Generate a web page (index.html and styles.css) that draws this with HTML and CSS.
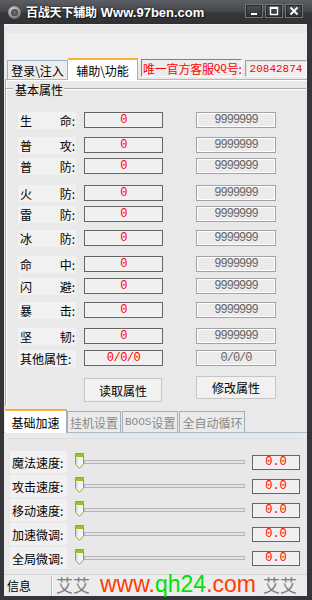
FILE: index.html
```html
<!DOCTYPE html>
<html>
<head>
<meta charset="utf-8">
<link rel="stylesheet" href="styles.css">
</head>
<body>
<div class="window">
  <div class="titlebar">
    <div class="appicon"><div class="appicon-in"></div></div>
    <div class="title"><span class="title-cn">百战天下辅助</span><span class="title-en">Www.97ben.com</span></div>
    <div class="tbtns">
      <div class="tbtn"><svg width="18" height="14" viewBox="0 0 18 14"><rect x="6" y="9" width="6" height="2" fill="#fff"/></svg></div>
      <div class="tbtn"><svg width="18" height="14" viewBox="0 0 18 14"><rect x="5.5" y="3.5" width="7" height="7" fill="none" stroke="#fff" stroke-width="1.4"/><rect x="5" y="3" width="8" height="2" fill="#fff"/></svg></div>
      <div class="tbtn"><svg width="18" height="14" viewBox="0 0 18 14"><path d="M5.5 3.5 L12.5 10.5 M12.5 3.5 L5.5 10.5" stroke="#fff" stroke-width="1.8"/></svg></div>
    </div>
  </div>
  <div class="client">
    <div class="topband"></div>
    <div class="tabrow">
      <div class="tab">登录\注入</div>
      <div class="tab active">辅助\功能</div>
      <div class="qqlabel">唯一官方客服<span class="mono">QQ</span>号:</div>
      <div class="qqbox">20842874</div>
    </div>
    <div class="panel1">
      <div class="legend"><span class="legend-line short"></span><span class="legend-text">基本属性</span><span class="legend-line"></span></div>
      <div class="rows">
        <div class="row r1"><div class="lbl"><span>生</span><span>命:</span></div><div class="val">0</div><div class="max">9999999</div></div>
        <div class="row r2"><div class="lbl"><span>普</span><span>攻:</span></div><div class="val">0</div><div class="max">9999999</div></div>
        <div class="row r3"><div class="lbl"><span>普</span><span>防:</span></div><div class="val">0</div><div class="max">9999999</div></div>
        <div class="row r4"><div class="lbl"><span>火</span><span>防:</span></div><div class="val">0</div><div class="max">9999999</div></div>
        <div class="row r5"><div class="lbl"><span>雷</span><span>防:</span></div><div class="val">0</div><div class="max">9999999</div></div>
        <div class="row r6"><div class="lbl"><span>冰</span><span>防:</span></div><div class="val">0</div><div class="max">9999999</div></div>
        <div class="row r7"><div class="lbl"><span>命</span><span>中:</span></div><div class="val">0</div><div class="max">9999999</div></div>
        <div class="row r8"><div class="lbl"><span>闪</span><span>避:</span></div><div class="val">0</div><div class="max">9999999</div></div>
        <div class="row r9"><div class="lbl"><span>暴</span><span>击:</span></div><div class="val">0</div><div class="max">9999999</div></div>
        <div class="row r10"><div class="lbl"><span>坚</span><span>韧:</span></div><div class="val">0</div><div class="max">9999999</div></div>
        <div class="row r11"><div class="lbl"><span>其他属性:</span></div><div class="val">0/0/0</div><div class="max">0/0/0</div></div>
      </div>
      <div class="btnrow">
        <div class="btn btn-read">读取属性</div>
        <div class="btn btn-write">修改属性</div>
      </div>
    </div>
    <div class="tabrow2">
      <div class="tab2 active">基础加速</div>
      <div class="tab2">挂机设置</div>
      <div class="tab2"><span class="mono">BOOS</span>设置</div>
      <div class="tab2">全自动循环</div>
    </div>
    <div class="panel2">
      <div class="panel2-in">
        <div class="srow"><div class="slbl">魔法速度:</div><div class="slider"><svg class="thumb" width="9" height="16" viewBox="0 0 9 16"><path d="M0.5 0.5 H8.5 V11 L4.5 15.5 L0.5 11 Z" fill="#f4f4f4" stroke="#7cb518"/><rect x="1" y="1" width="7" height="3" fill="#8fc81c"/><path d="M2 5 V11" stroke="#c8c8c8"/></svg><div class="track"></div></div><div class="sval">0.0</div></div>
        <div class="srow"><div class="slbl">攻击速度:</div><div class="slider"><svg class="thumb" width="9" height="16" viewBox="0 0 9 16"><path d="M0.5 0.5 H8.5 V11 L4.5 15.5 L0.5 11 Z" fill="#f4f4f4" stroke="#7cb518"/><rect x="1" y="1" width="7" height="3" fill="#8fc81c"/><path d="M2 5 V11" stroke="#c8c8c8"/></svg><div class="track"></div></div><div class="sval">0.0</div></div>
        <div class="srow"><div class="slbl">移动速度:</div><div class="slider"><svg class="thumb" width="9" height="16" viewBox="0 0 9 16"><path d="M0.5 0.5 H8.5 V11 L4.5 15.5 L0.5 11 Z" fill="#f4f4f4" stroke="#7cb518"/><rect x="1" y="1" width="7" height="3" fill="#8fc81c"/><path d="M2 5 V11" stroke="#c8c8c8"/></svg><div class="track"></div></div><div class="sval">0.0</div></div>
        <div class="srow"><div class="slbl">加速微调:</div><div class="slider"><svg class="thumb" width="9" height="16" viewBox="0 0 9 16"><path d="M0.5 0.5 H8.5 V11 L4.5 15.5 L0.5 11 Z" fill="#f4f4f4" stroke="#7cb518"/><rect x="1" y="1" width="7" height="3" fill="#8fc81c"/><path d="M2 5 V11" stroke="#c8c8c8"/></svg><div class="track"></div></div><div class="sval">0.0</div></div>
        <div class="srow"><div class="slbl">全局微调:</div><div class="slider"><svg class="thumb" width="9" height="16" viewBox="0 0 9 16"><path d="M0.5 0.5 H8.5 V11 L4.5 15.5 L0.5 11 Z" fill="#f4f4f4" stroke="#7cb518"/><rect x="1" y="1" width="7" height="3" fill="#8fc81c"/><path d="M2 5 V11" stroke="#c8c8c8"/></svg><div class="track"></div></div><div class="sval">0.0</div></div>
      </div>
    </div>
    <div class="status">
      <div class="status-info">信息</div>
      <div class="status-sep"></div>
      <div class="watermark"><span class="wm-grey">艾艾</span><span class="wm-red">www.</span><span class="wm-green">qh24</span><span class="wm-red">.com</span><span class="wm-grey wm-right">艾艾</span></div>
    </div>
  </div>
</div>
</body>
</html>
```

FILE: styles.css
```css
* { box-sizing: border-box; }
html, body { margin: 0; padding: 0; }
body {
  width: 312px;
  height: 600px;
  overflow: hidden;
  font-family: "Noto Sans CJK SC", "Liberation Sans", sans-serif;
  font-size: 12px;
  color: #000;
}
.window {
  width: 312px;
  height: 600px;
  background: #34363a;
  display: flex;
  flex-direction: column;
}
.titlebar {
  height: 24px;
  flex: none;
  display: flex;
  align-items: center;
  background: linear-gradient(#5b5e64 0%, #46484d 45%, #35373b 55%, #2f3135 100%);
}
.appicon {
  width: 13px;
  height: 13px;
  margin-left: 8px;
  border-radius: 50%;
  background: radial-gradient(circle at 40% 35%, #e8e8e8 0%, #9a9a9a 45%, #4a4a4a 100%);
  display: flex;
  align-items: center;
  justify-content: center;
}
.appicon-in {
  width: 7px;
  height: 7px;
  border-radius: 50%;
  background: radial-gradient(circle at 50% 50%, #7a7a7a 0%, #2a2a2a 100%);
}
.title {
  margin-left: 5px;
  color: #fff;
  font-weight: bold;
  display: flex;
  align-items: baseline;
  text-shadow: 0 0 2px #1a1a1a, 1px 1px 1px #1a1a1a;
  margin-top: -2px;
}
.title-cn { font-size: 12px; letter-spacing: -0.2px; }
.title-en { font-family: "Liberation Sans", sans-serif; font-size: 13px; margin-left: 4px; }
.tbtns {
  margin-left: auto;
  margin-right: 9px;
  display: flex;
  gap: 2px;
  margin-top: -2px;
}
.tbtn {
  width: 18px;
  height: 14px;
  border: 1px solid #74777c;
  background: linear-gradient(#4c4f54, #2c2e32);
  box-shadow: inset 0 0 0 1px #25272a;
  display: flex;
}
.tbtn svg { margin: -1px; }
.client {
  flex: 1;
  margin: 0 5px 4px 4px;
  background: #e9e9e9;
  border-top: 1px solid #f4f4f4;
  display: flex;
  flex-direction: column;
}
.topband {
  height: 32px;
  margin: 8px 0 0 3px;
  background: #efefef;
  flex: none;
  margin-bottom: -40px;
}
.tabrow {
  margin-top: 33px;
  height: 21px;
  display: flex;
  align-items: flex-end;
  padding-left: 3px;
  position: relative;
  z-index: 2;
  flex: none;
}
.tab {
  height: 19px;
  width: 61px;
  border: 1px solid #9fb1bf;
  border-bottom: none;
  background: #ececec;
  display: flex;
  align-items: center;
  justify-content: center;
  white-space: nowrap;
  padding-top: 1px;
}
.tab.active {
  height: 22px;
  width: 70px;
  background: #fff;
  border-top: 2px solid #f6b334;
  margin-bottom: -1px;
  border-left: none;
}
.qqlabel {
  align-self: flex-start;
  margin-left: 3px;
  margin-top: 1px;
  height: 18px;
  width: 101px;
  border: 1px solid;
  border-color: #808080 #ffffff #ffffff #808080;
  background: #ececec;
  color: #ff0000;
  font-size: 12px;
  display: flex;
  align-items: center;
  padding-left: 1px;
  white-space: nowrap;
  letter-spacing: -0.2px;
}
.mono { font-family: "Liberation Mono", "DejaVu Sans Mono", monospace; font-size: 11px; }
.qqbox {
  align-self: flex-start;
  margin-left: 3px;
  margin-top: 2px;
  height: 17px;
  width: 62px;
  border: 1px solid;
  border-color: #a0a0a0 #ffffff #ffffff #a0a0a0;
  box-shadow: inset 1px 1px 0 #e0e0e0;
  background: #f0f0f0;
  color: #ff0000;
  font-family: "Liberation Mono", monospace;
  font-size: 11px;
  display: flex;
  align-items: center;
  justify-content: center;
}
.panel1 {
  height: 327px;
  margin-left: 1px;
  border-left: 1px solid #a8a8a8;
  border-top: 1px solid #a9bac6;
  box-shadow: inset 1px 1px 0 #ffffff;
  flex: none;
  display: flex;
  flex-direction: column;
}
.legend {
  margin-top: 2px;
  height: 14px;
  display: flex;
  align-items: center;
}
.legend-line {
  flex: 1;
  height: 2px;
  border-top: 1px solid #a8a8a8;
  border-bottom: 1px solid #ffffff;
  margin-right: 1px;
}
.legend-line.short { flex: none; width: 7px; }
.legend-text { padding: 0 1px; }
.rows {
  display: flex;
  flex-direction: column;
  padding-left: 12px;
  margin-top: 16px;
}
.row {
  display: flex;
  align-items: center;
  height: 16px;
}
.r2 { margin-top: 9px; }
.r3 { margin-top: 5px; }
.r4 { margin-top: 11px; }
.r5 { margin-top: 5px; }
.r6 { margin-top: 8px; }
.r7 { margin-top: 10px; }
.r8 { margin-top: 6px; }
.r9 { margin-top: 8px; }
.r10 { margin-top: 10px; }
.r11 { margin-top: 6px; }
.lbl {
  width: 58px;
  height: 17px;
  background: #f1f1f1;
  display: flex;
  justify-content: space-between;
  align-items: center;
  padding: 0 1px 0 2px;
  white-space: nowrap;
}
.val {
  margin-left: 8px;
  width: 79px;
  height: 16px;
  border: 1px solid #666666;
  background: #f0f0f0;
  color: #ff0000;
  font-family: "Liberation Mono", monospace;
  font-size: 12px;
  letter-spacing: -0.5px;
  display: flex;
  align-items: center;
  justify-content: center;
}
.max {
  margin-left: 33px;
  width: 80px;
  height: 16px;
  border: 1px solid #a2a2a2;
  box-shadow: inset 0 0 0 1px #ffffff;
  background: #ebebeb;
  color: #666666;
  font-family: "Liberation Mono", monospace;
  font-size: 12px;
  letter-spacing: -1px;
  display: flex;
  align-items: center;
  justify-content: center;
}
.btnrow {
  display: flex;
  align-items: flex-start;
  padding-left: 78px;
  margin-top: 10px;
}
.btn {
  width: 78px;
  height: 23px;
  border: 1px solid #c6c6c6;
  background: #f1f1f1;
  display: flex;
  align-items: center;
  justify-content: center;
  font-size: 12px;
}
.btn-read { margin-top: 2px; height: 24px; }
.btn-write { margin-left: 34px; width: 80px; }
.tabrow2 {
  height: 26px;
  display: flex;
  align-items: flex-end;
  padding-left: 1px;
  flex: none;
  position: relative;
  z-index: 2;
}
.tab2 {
  height: 21px;
  border: 1px solid #9fb1bf;
  border-bottom: none;
  background: #eaeaea;
  color: #8a8a8a;
  display: flex;
  align-items: center;
  padding: 0 2px;
  margin-right: 1px;
  white-space: nowrap;
}
.tab2 .mono { font-size: 11px; }
.tab2.active {
  height: 24px;
  width: 62px;
  background: #fff;
  color: #000;
  border-top: 2px solid #f6b334;
  border-left: none;
  margin-bottom: -1px;
  justify-content: center;
  margin-right: 0;
}
.panel2 {
  height: 141px;
  border-top: 1px solid #a9bac6;
  flex: none;
  padding: 5px 4px 0 4px;
}
.panel2-in {
  height: 134px;
  background: #e8e8e8;
  border-top: 1px solid #dcdcdc;
  display: flex;
  flex-direction: column;
  padding-top: 15px;
  padding-left: 2px;
}
.srow {
  display: flex;
  align-items: center;
  height: 16px;
  margin-bottom: 8px;
}
.slbl {
  width: 57px;
  height: 22px;
  background: #f1f1f1;
  display: flex;
  align-items: center;
  padding-left: 2px;
  white-space: nowrap;
}
.slider {
  display: flex;
  align-items: center;
  margin-left: 8px;
  width: 170px;
}
.thumb { flex: none; margin-top: -2px; }
.track {
  width: 161px;
  height: 4px;
  border: 1px solid #b4b4b4;
  background: #e4e4e4;
  margin-top: -1px;
}
.sval {
  margin-left: 7px;
  width: 48px;
  height: 15px;
  border: 1px solid #666666;
  background: #f0f0f0;
  color: #ff0000;
  font-family: "Liberation Mono", monospace;
  font-size: 12px;
  display: flex;
  align-items: center;
  justify-content: center;
}
.status {
  flex: 1;
  border-top: 1px solid #d4d4d4;
  margin-top: 1px;
  background: #ececec;
  display: flex;
  align-items: center;
  position: relative;
}
.status-info { margin-left: 3px; width: 44px; }
.status-sep {
  width: 2px;
  height: 20px;
  border-left: 1px solid #b8b8b8;
  border-right: 1px solid #ffffff;
}
.watermark {
  position: absolute;
  left: 52px;
  top: -4px;
  right: 0;
  display: flex;
  align-items: baseline;
  font-family: "Liberation Sans", sans-serif;
  font-size: 23px;
  white-space: nowrap;
}
.wm-grey { color: #7d7d7d; font-family: "Noto Sans CJK SC", sans-serif; font-size: 17px; }
.wm-red { color: #ff3c00; }
.wm-green { color: #00e000; }
.wm-grey:first-child { margin-right: 10px; }
.wm-right { margin-left: 7px; }
```
